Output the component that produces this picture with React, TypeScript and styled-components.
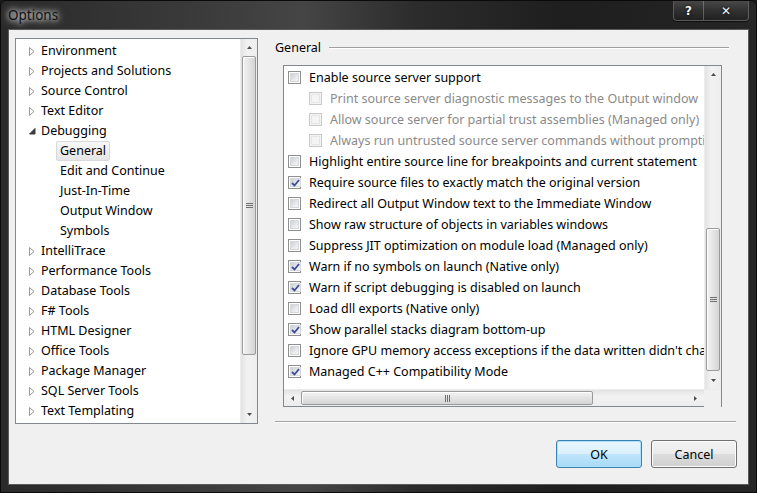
import React from 'react';
import styled, { createGlobalStyle } from 'styled-components';

const GlobalStyle = createGlobalStyle`
  html, body {
    margin: 0;
    padding: 0;
    background: #1b1b1b;
  }
  * {
    box-sizing: border-box;
  }
`;

interface TreeItem {
    label: string;
    level: 0 | 1;
    state?: 'collapsed' | 'expanded';
    selected?: boolean;
}

const treeItems: TreeItem[] = [
    { label: 'Environment', level: 0, state: 'collapsed' },
    { label: 'Projects and Solutions', level: 0, state: 'collapsed' },
    { label: 'Source Control', level: 0, state: 'collapsed' },
    { label: 'Text Editor', level: 0, state: 'collapsed' },
    { label: 'Debugging', level: 0, state: 'expanded' },
    { label: 'General', level: 1, selected: true },
    { label: 'Edit and Continue', level: 1 },
    { label: 'Just-In-Time', level: 1 },
    { label: 'Output Window', level: 1 },
    { label: 'Symbols', level: 1 },
    { label: 'IntelliTrace', level: 0, state: 'collapsed' },
    { label: 'Performance Tools', level: 0, state: 'collapsed' },
    { label: 'Database Tools', level: 0, state: 'collapsed' },
    { label: 'F# Tools', level: 0, state: 'collapsed' },
    { label: 'HTML Designer', level: 0, state: 'collapsed' },
    { label: 'Office Tools', level: 0, state: 'collapsed' },
    { label: 'Package Manager', level: 0, state: 'collapsed' },
    { label: 'SQL Server Tools', level: 0, state: 'collapsed' },
    { label: 'Text Templating', level: 0, state: 'collapsed' },
];

interface OptionItem {
    label: string;
    checked?: boolean;
    indent?: boolean;
    disabled?: boolean;
}

const options: OptionItem[] = [
    { label: 'Enable source server support' },
    { label: 'Print source server diagnostic messages to the Output window', indent: true, disabled: true },
    { label: 'Allow source server for partial trust assemblies (Managed only)', indent: true, disabled: true },
    { label: 'Always run untrusted source server commands without prompting', indent: true, disabled: true },
    { label: 'Highlight entire source line for breakpoints and current statement' },
    { label: 'Require source files to exactly match the original version', checked: true },
    { label: 'Redirect all Output Window text to the Immediate Window' },
    { label: 'Show raw structure of objects in variables windows' },
    { label: 'Suppress JIT optimization on module load (Managed only)' },
    { label: 'Warn if no symbols on launch (Native only)', checked: true },
    { label: 'Warn if script debugging is disabled on launch', checked: true },
    { label: 'Load dll exports (Native only)' },
    { label: 'Show parallel stacks diagram bottom-up', checked: true },
    { label: "Ignore GPU memory access exceptions if the data written didn't change the value" },
    { label: 'Managed C++ Compatibility Mode', checked: true },
];

const uiFont = `"Noto Sans", "Open Sans", sans-serif`;

const Window = styled.div`
    width: 757px;
    height: 493px;
    display: flex;
    flex-direction: column;
    background: linear-gradient(90deg, #2a2a2a 0%, #3a3a3a 25%, #454545 40%, #2c2c2c 55%, #1e1e1e 75%, #262626 100%);
    border: 1px solid #0a0a0a;
    border-radius: 6px 6px 0 0;
    font-family: ${uiFont};
`;

const TitleBar = styled.div`
    height: 28px;
    display: flex;
    align-items: flex-start;
    padding-left: 7px;
`;

const Title = styled.div`
    margin-top: 5px;
    font-family: "Noto Sans", sans-serif;
    font-size: 13.5px;
    color: #101010;
    text-shadow: 0 0 5px rgba(255, 255, 255, 0.95), 0 0 9px rgba(255, 255, 255, 0.7), 0 0 14px rgba(255, 255, 255, 0.4);
`;

const Captions = styled.div`
    margin-left: auto;
    margin-right: 7px;
    display: flex;
    border: 1px solid rgba(255, 255, 255, 0.25);
    border-top: none;
    border-radius: 0 0 4px 4px;
    overflow: hidden;
    box-shadow: 0 1px 0 rgba(0, 0, 0, 0.6);
`;

const CaptionButton = styled.div<{ $w: number }>`
    width: ${({ $w }) => $w}px;
    height: 19px;
    display: flex;
    align-items: center;
    justify-content: center;
    color: #f2f2f2;
    font-family: "DejaVu Sans", sans-serif;
    font-weight: bold;
    font-size: 12px;
    background: linear-gradient(180deg, rgba(255, 255, 255, 0.16) 0%, rgba(255, 255, 255, 0.06) 50%, rgba(0, 0, 0, 0.1) 100%);
    text-shadow: 0 0 3px #000;
    & + & {
        border-left: 1px solid rgba(255, 255, 255, 0.25);
    }
`;

const Client = styled.div`
    flex: 1;
    margin: 0 7px 7px 7px;
    background: #f0f0f0;
    border: 1px solid #5a5a5a;
    display: flex;
    flex-direction: column;
    padding: 8px 0 0 6px;
`;

const Body = styled.div`
    display: flex;
`;

const TreeBox = styled.div`
    width: 243px;
    height: 386px;
    border: 1px solid #828790;
    background: #fff;
    display: flex;
`;

const TreeList = styled.div`
    flex: 1;
    padding-top: 2px;
    overflow: hidden;
`;

const TreeRow = styled.div<{ $level: number }>`
    height: 20px;
    display: flex;
    align-items: center;
    padding-left: ${({ $level }) => ($level === 0 ? 12 : 40)}px;
    font-size: 12.5px;
    color: #000;
    white-space: nowrap;
`;

const Expander = styled.span`
    width: 8px;
    height: 9px;
    margin-right: 1px;
    display: flex;
    align-items: center;
    justify-content: center;
`;

const TreeLabel = styled.span<{ $selected?: boolean }>`
    padding: 1px 3px;
    line-height: 16px;
    border: 1px solid ${({ $selected }) => ($selected ? '#d9d9d9' : 'transparent')};
    border-radius: 2px;
    background: ${({ $selected }) => ($selected ? 'linear-gradient(180deg, #f8f8f8, #e5e5e5)' : 'transparent')};
`;

const VScroll = styled.div`
    width: 17px;
    display: flex;
    flex-direction: column;
    background: linear-gradient(90deg, #e3e3e3, #f2f2f2 40%, #ededed);
    border-left: 1px solid #ececec;
`;

const ScrollArrow = styled.div`
    width: 17px;
    height: 17px;
    flex: none;
    display: flex;
    align-items: center;
    justify-content: center;
`;

const ScrollTrack = styled.div<{ $horizontal?: boolean }>`
    flex: 1;
    display: flex;
    flex-direction: ${({ $horizontal }) => ($horizontal ? 'row' : 'column')};
`;

const VThumb = styled.div`
    margin: 0 1px;
    border: 1px solid #9a9a9a;
    border-radius: 2px;
    background: linear-gradient(90deg, #f3f3f3, #e4e4e4 50%, #d4d4d4);
    display: flex;
    align-items: center;
    justify-content: center;
    box-shadow: inset 1px 1px 0 #fff;
`;

const HScroll = styled.div`
    height: 17px;
    display: flex;
    background: linear-gradient(180deg, #e3e3e3, #f2f2f2 40%, #ededed);
    border-top: 1px solid #ececec;
`;

const HThumb = styled.div`
    margin: 1px 0;
    border: 1px solid #9a9a9a;
    border-radius: 2px;
    background: linear-gradient(180deg, #f3f3f3, #e4e4e4 50%, #d4d4d4);
    display: flex;
    align-items: center;
    justify-content: center;
    box-shadow: inset 1px 1px 0 #fff;
`;

const Corner = styled.div`
    width: 17px;
    height: 17px;
    background: #f0f0f0;
`;

const RightPane = styled.div`
    width: 461px;
    margin-left: 17px;
    display: flex;
    flex-direction: column;
`;

const GroupHeader = styled.div`
    height: 19px;
    display: flex;
    align-items: center;
    font-size: 12.5px;
    color: #000;
`;

const HeaderRule = styled.div`
    flex: 1;
    height: 2px;
    margin-left: 8px;
    margin-right: 7px;
    border-top: 1px solid #a0a0a0;
    border-bottom: 1px solid #fff;
`;

const OptionsBox = styled.div`
    margin: 8px 0 0 8px;
    width: 439px;
    height: 342px;
    border: 1px solid #828790;
    background: #fff;
    display: flex;
    flex-direction: column;
`;

const OptionsMain = styled.div`
    flex: 1;
    display: flex;
    min-height: 0;
`;

const OptionsList = styled.div`
    flex: 1;
    overflow: hidden;
    padding-top: 1px;
`;

const OptionRow = styled.div<{ $indent?: boolean; $disabled?: boolean }>`
    height: 21px;
    display: flex;
    align-items: center;
    padding-left: ${({ $indent }) => ($indent ? 25 : 4)}px;
    font-size: 12.5px;
    white-space: nowrap;
    color: ${({ $disabled }) => ($disabled ? '#8a8a8a' : '#000')};
`;

const CheckBox = styled.span<{ $disabled?: boolean }>`
    width: 13px;
    height: 13px;
    flex: none;
    margin-right: 8px;
    border: 1px solid ${({ $disabled }) => ($disabled ? '#c8c8c8' : '#8e8f8f')};
    background: ${({ $disabled }) => ($disabled ? '#f4f4f4' : '#fff')};
    padding: 1px;
    display: flex;
`;

const CheckInner = styled.span<{ $disabled?: boolean }>`
    flex: 1;
    display: flex;
    align-items: center;
    justify-content: center;
    background: ${({ $disabled }) =>
        $disabled ? '#f4f4f4' : 'linear-gradient(135deg, #cbcfd5 0%, #e6e8eb 55%, #f6f6f6 100%)'};
    border: 1px solid ${({ $disabled }) => ($disabled ? '#e6e6e6' : '#d6d8da')};
`;

const Separator = styled.div`
    margin-top: 14px;
    height: 2px;
    border-top: 1px solid #a0a0a0;
    border-bottom: 1px solid #fff;
`;

const Footer = styled.div`
    display: flex;
    justify-content: flex-end;
    gap: 9px;
    padding: 16px 11px 0 0;
`;

const DialogButton = styled.div<{ $default?: boolean }>`
    width: 86px;
    height: 28px;
    display: flex;
    align-items: center;
    justify-content: center;
    font-size: 12.5px;
    color: #000;
    border-radius: 3px;
    border: 1px solid ${({ $default }) => ($default ? '#3c7fb1' : '#707070')};
    background: ${({ $default }) =>
        $default
            ? 'linear-gradient(180deg, #eaf6fd 0%, #d9f0fc 50%, #bee6fd 51%, #a7d9f5 100%)'
            : 'linear-gradient(180deg, #f2f2f2 0%, #ebebeb 50%, #dddddd 51%, #cfcfcf 100%)'};
    box-shadow: inset 0 0 0 1px ${({ $default }) => ($default ? '#a8e1fb' : '#fcfcfc')};
`;

function Collapsed() {
    return (
        <svg width="6" height="9" viewBox="0 0 6 9">
            <path d="M0.5 0.5 L5 4.5 L0.5 8.5 Z" fill="#fff" stroke="#989898" strokeWidth="1" />
        </svg>
    );
}

function Expanded() {
    return (
        <svg width="7" height="7" viewBox="0 0 7 7">
            <path d="M6 0.5 L6 6 L0.5 6 Z" fill="#3c3c3c" stroke="#3c3c3c" strokeWidth="1" strokeLinejoin="round" />
        </svg>
    );
}

function Arrow({ dir }: { dir: 'up' | 'down' | 'left' | 'right' }) {
    const paths = {
        up: 'M1 4 L3.5 1 L6 4 Z',
        down: 'M1 1 L3.5 4 L6 1 Z',
        left: 'M4 1 L1 3.5 L4 6 Z',
        right: 'M1 1 L4 3.5 L1 6 Z',
    };
    const vertical = dir === 'up' || dir === 'down';
    return (
        <svg width={vertical ? 7 : 5} height={vertical ? 5 : 7} viewBox={vertical ? '0 0 7 5' : '0 0 5 7'}>
            <path d={paths[dir]} fill="#4d4d4d" />
        </svg>
    );
}

function Grip({ vertical }: { vertical: boolean }) {
    return vertical ? (
        <svg width="7" height="7" viewBox="0 0 7 7">
            <path d="M0 1.5 H7 M0 3.5 H7 M0 5.5 H7" stroke="#6f6f6f" strokeWidth="1" />
        </svg>
    ) : (
        <svg width="7" height="7" viewBox="0 0 7 7">
            <path d="M1.5 0 V7 M3.5 0 V7 M5.5 0 V7" stroke="#6f6f6f" strokeWidth="1" />
        </svg>
    );
}

function Check() {
    return (
        <svg width="9" height="8" viewBox="0 0 9 8">
            <path d="M1 4 L3.5 6.5 L8 1" fill="none" stroke="#3a4d96" strokeWidth="1.8" />
        </svg>
    );
}

function App() {
    return (
        <>
            <GlobalStyle />
            <Window>
                <TitleBar>
                    <Title>Options</Title>
                    <Captions>
                        <CaptionButton $w={29}>?</CaptionButton>
                        <CaptionButton $w={45}>✕</CaptionButton>
                    </Captions>
                </TitleBar>
                <Client>
                    <Body>
                        <TreeBox>
                            <TreeList>
                                {treeItems.map((item) => (
                                    <TreeRow key={item.label} $level={item.level}>
                                        {item.level === 0 && (
                                            <Expander>{item.state === 'expanded' ? <Expanded /> : <Collapsed />}</Expander>
                                        )}
                                        <TreeLabel $selected={item.selected}>{item.label}</TreeLabel>
                                    </TreeRow>
                                ))}
                            </TreeList>
                            <VScroll>
                                <ScrollArrow><Arrow dir="up" /></ScrollArrow>
                                <ScrollTrack>
                                    <VThumb style={{ height: 299 }}><Grip vertical /></VThumb>
                                </ScrollTrack>
                                <ScrollArrow><Arrow dir="down" /></ScrollArrow>
                            </VScroll>
                        </TreeBox>
                        <RightPane>
                            <GroupHeader>
                                General
                                <HeaderRule />
                            </GroupHeader>
                            <OptionsBox>
                                <OptionsMain>
                                    <OptionsList>
                                        {options.map((opt) => (
                                            <OptionRow key={opt.label} $indent={opt.indent} $disabled={opt.disabled}>
                                                <CheckBox $disabled={opt.disabled}>
                                                    <CheckInner $disabled={opt.disabled}>{opt.checked && <Check />}</CheckInner>
                                                </CheckBox>
                                                {opt.label}
                                            </OptionRow>
                                        ))}
                                    </OptionsList>
                                    <VScroll>
                                        <ScrollArrow><Arrow dir="up" /></ScrollArrow>
                                        <ScrollTrack>
                                            <VThumb style={{ marginTop: 145, height: 143 }}><Grip vertical /></VThumb>
                                        </ScrollTrack>
                                        <ScrollArrow><Arrow dir="down" /></ScrollArrow>
                                    </VScroll>
                                </OptionsMain>
                                <HScroll>
                                    <ScrollArrow><Arrow dir="left" /></ScrollArrow>
                                    <ScrollTrack $horizontal>
                                        <HThumb style={{ width: 292 }}><Grip vertical={false} /></HThumb>
                                    </ScrollTrack>
                                    <ScrollArrow><Arrow dir="right" /></ScrollArrow>
                                    <Corner />
                                </HScroll>
                            </OptionsBox>
                            <Separator />
                        </RightPane>
                    </Body>
                    <Footer>
                        <DialogButton $default>OK</DialogButton>
                        <DialogButton>Cancel</DialogButton>
                    </Footer>
                </Client>
            </Window>
        </>
    );
}

export default App;
